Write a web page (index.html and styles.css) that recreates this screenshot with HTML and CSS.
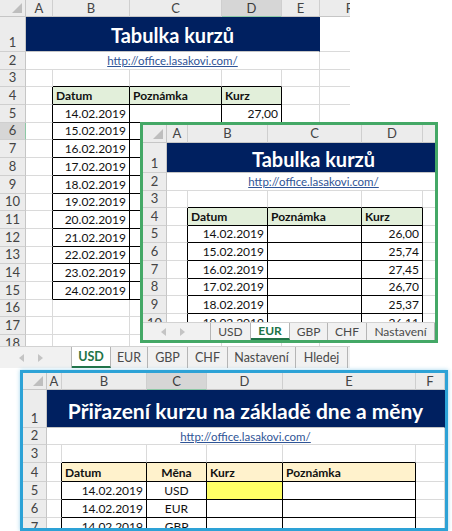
FILE: index.html
```html
<!DOCTYPE html>
<html lang="cs">
<head>
<meta charset="utf-8">
<title>Tabulka kurzů</title>
<link rel="stylesheet" href="styles.css">
</head>
<body>

<!-- Window 1: USD sheet -->
<div class="win w1">
  <div class="sheet">
    <div class="grid g1">
      <div class="c corner"><svg width="10" height="10" viewBox="0 0 10 10"><polygon points="10,0 10,10 0,10" fill="#BEBEBE"/></svg></div>
      <div class="c h">A</div><div class="c h">B</div><div class="c h">C</div><div class="c h sel">D</div><div class="c h">E</div><div class="c h">F</div>

      <div class="c r">1</div><div class="c title s5">Tabulka kurzů</div><div class="c"></div>
      <div class="c r">2</div><div class="c url s5"><span>http://office.lasakovi.com/</span></div><div class="c"></div>
      <div class="c r">3</div><div class="c"></div><div class="c bb"></div><div class="c bb"></div><div class="c bb"></div><div class="c"></div><div class="c"></div>
      <div class="c r">4</div><div class="c br"></div><div class="c th">Datum</div><div class="c th">Poznámka</div><div class="c th">Kurz</div><div class="c"></div><div class="c"></div>
      <div class="c r">5</div><div class="c br"></div><div class="c td n">14.02.2019</div><div class="c td"></div><div class="c td n">27,00</div><div class="c"></div><div class="c"></div>
      <div class="c r rsel">6</div><div class="c br"></div><div class="c td n">15.02.2019</div><div class="c td"></div><div class="c td"></div><div class="c"></div><div class="c"></div>
      <div class="c r">7</div><div class="c br"></div><div class="c td n">16.02.2019</div><div class="c td"></div><div class="c td"></div><div class="c"></div><div class="c"></div>
      <div class="c r">8</div><div class="c br"></div><div class="c td n">17.02.2019</div><div class="c td"></div><div class="c td"></div><div class="c"></div><div class="c"></div>
      <div class="c r">9</div><div class="c br"></div><div class="c td n">18.02.2019</div><div class="c td"></div><div class="c td"></div><div class="c"></div><div class="c"></div>
      <div class="c r">10</div><div class="c br"></div><div class="c td n">19.02.2019</div><div class="c td"></div><div class="c td"></div><div class="c"></div><div class="c"></div>
      <div class="c r">11</div><div class="c br"></div><div class="c td n">20.02.2019</div><div class="c td"></div><div class="c td"></div><div class="c"></div><div class="c"></div>
      <div class="c r">12</div><div class="c br"></div><div class="c td n">21.02.2019</div><div class="c td"></div><div class="c td"></div><div class="c"></div><div class="c"></div>
      <div class="c r">13</div><div class="c br"></div><div class="c td n">22.02.2019</div><div class="c td"></div><div class="c td"></div><div class="c"></div><div class="c"></div>
      <div class="c r">14</div><div class="c br"></div><div class="c td n">23.02.2019</div><div class="c td"></div><div class="c td"></div><div class="c"></div><div class="c"></div>
      <div class="c r">15</div><div class="c br"></div><div class="c td n">24.02.2019</div><div class="c td"></div><div class="c td"></div><div class="c"></div><div class="c"></div>
      <div class="c r">16</div><div class="c"></div><div class="c"></div><div class="c"></div><div class="c"></div><div class="c"></div><div class="c"></div>
      <div class="c r">17</div><div class="c"></div><div class="c"></div><div class="c"></div><div class="c"></div><div class="c"></div><div class="c"></div>
      <div class="c r">18</div><div class="c"></div><div class="c"></div><div class="c"></div><div class="c"></div><div class="c"></div><div class="c"></div>
    </div>
  </div>
  <div class="tabs t1">
    <div class="nav">
      <svg width="6" height="8" viewBox="0 0 6 8"><polygon points="5,0 5,8 0,4" fill="#C4C4C4"/></svg>
      <svg width="6" height="8" viewBox="0 0 6 8"><polygon points="1,0 1,8 6,4" fill="#C4C4C4"/></svg>
    </div>
    <div class="tab act tu">USD</div>
    <div class="tab te">EUR</div>
    <div class="tab tg">GBP</div>
    <div class="tab tc">CHF</div>
    <div class="tab tn">Nastavení</div>
    <div class="tab th2">Hledej</div>
  </div>
</div>

<!-- Window 2: EUR sheet -->
<div class="win w2">
  <div class="sheet">
    <div class="grid g2">
      <div class="c corner"><svg width="10" height="10" viewBox="0 0 10 10"><polygon points="10,0 10,10 0,10" fill="#BEBEBE"/></svg></div>
      <div class="c h">A</div><div class="c h">B</div><div class="c h">C</div><div class="c h">D</div><div class="c h">E</div>

      <div class="c r">1</div><div class="c title s5">Tabulka kurzů</div>
      <div class="c r">2</div><div class="c url s5"><span>http://office.lasakovi.com/</span></div>
      <div class="c r">3</div><div class="c"></div><div class="c bb"></div><div class="c bb"></div><div class="c bb"></div><div class="c"></div>
      <div class="c r">4</div><div class="c br"></div><div class="c th">Datum</div><div class="c th">Poznámka</div><div class="c th">Kurz</div><div class="c"></div>
      <div class="c r">5</div><div class="c br"></div><div class="c td n">14.02.2019</div><div class="c td"></div><div class="c td n">26,00</div><div class="c"></div>
      <div class="c r">6</div><div class="c br"></div><div class="c td n">15.02.2019</div><div class="c td"></div><div class="c td n">25,74</div><div class="c"></div>
      <div class="c r">7</div><div class="c br"></div><div class="c td n">16.02.2019</div><div class="c td"></div><div class="c td n">27,45</div><div class="c"></div>
      <div class="c r">8</div><div class="c br"></div><div class="c td n">17.02.2019</div><div class="c td"></div><div class="c td n">26,70</div><div class="c"></div>
      <div class="c r">9</div><div class="c br"></div><div class="c td n">18.02.2019</div><div class="c td"></div><div class="c td n">25,37</div><div class="c"></div>
      <div class="c r top">10</div><div class="c br"></div><div class="c td n top">19.02.2019</div><div class="c td"></div><div class="c td n top">26,11</div><div class="c"></div>
    </div>
  </div>
  <div class="tabs t2">
    <div class="nav">
      <svg width="6" height="8" viewBox="0 0 6 8"><polygon points="5,0 5,8 0,4" fill="#C4C4C4"/></svg>
      <svg width="6" height="8" viewBox="0 0 6 8"><polygon points="1,0 1,8 6,4" fill="#C4C4C4"/></svg>
    </div>
    <div class="tab tu">USD</div>
    <div class="tab act te">EUR</div>
    <div class="tab tg">GBP</div>
    <div class="tab tc">CHF</div>
    <div class="tab tn">Nastavení</div>
  </div>
</div>

<!-- Window 3: lookup sheet -->
<div class="win w3">
  <div class="sheet">
    <div class="grid g3">
      <div class="c corner"><svg width="10" height="10" viewBox="0 0 10 10"><polygon points="10,0 10,10 0,10" fill="#BEBEBE"/></svg></div>
      <div class="c h">A</div><div class="c h">B</div><div class="c h sel">C</div><div class="c h">D</div><div class="c h">E</div><div class="c h">F</div>

      <div class="c r">1</div><div class="c title big s6">Přiřazení kurzu na základě dne a měny</div>
      <div class="c r">2</div><div class="c url s6"><span>http://office.lasakovi.com/</span></div>
      <div class="c r">3</div><div class="c"></div><div class="c bb"></div><div class="c bb"></div><div class="c bb"></div><div class="c bb"></div><div class="c"></div>
      <div class="c r">4</div><div class="c br"></div><div class="c th or">Datum</div><div class="c th or ctr">Měna</div><div class="c th or">Kurz</div><div class="c th or">Poznámka</div><div class="c"></div>
      <div class="c r">5</div><div class="c br"></div><div class="c td n">14.02.2019</div><div class="c td ctr">USD</div><div class="c td yel"></div><div class="c td"></div><div class="c"></div>
      <div class="c r">6</div><div class="c br"></div><div class="c td n">14.02.2019</div><div class="c td ctr">EUR</div><div class="c td"></div><div class="c td"></div><div class="c"></div>
      <div class="c r top">7</div><div class="c br"></div><div class="c td n top">14.02.2019</div><div class="c td ctr top">GBP</div><div class="c td"></div><div class="c td"></div><div class="c"></div>
    </div>
  </div>
</div>

</body>
</html>
```

FILE: styles.css
```css
* { box-sizing: border-box; margin: 0; padding: 0; }

html, body {
  width: 452px;
  height: 531px;
  overflow: hidden;
  background: #ffffff;
}

body {
  position: relative;
  font-family: Lato, "Liberation Sans", sans-serif;
  font-size: 12px;
  color: #111;
}

/* windows on the desktop */
.win {
  position: absolute;
  overflow: hidden;
  background: #fff;
  display: flex;
  flex-direction: column;
}
.w1 { left: 0; top: 0; width: 350px; height: 368px; }
.w2 {
  left: 140px; top: 122px; width: 298px; height: 221px;
  border: 3px solid #44A866;
}
.w3 {
  left: 20px; top: 370px; width: 428px; height: 161px;
  border: 3px solid #2DA2D6;
  box-shadow: 0 0 4px rgba(45, 162, 214, 0.45);
}

.sheet { flex: 1 1 auto; min-height: 0; overflow: hidden; }

.grid { display: grid; }
.g1 {
  grid-template-columns: 26px 27px 77px 92px 60px 38px 60px;
  grid-template-rows: 17px 35px repeat(17, 17.7px);
}
.g2 {
  grid-template-columns: 24px 21px 80px 94px 61px 38px;
  grid-template-rows: 18px 30px repeat(9, 17.6px);
}
.g3 {
  grid-template-columns: 24px 15px 85px 60px 76px 133px 29px;
  grid-template-rows: 17px 38px 17px 18px 19px 18px 18px 18px;
}

/* cells */
.c {
  display: flex;
  align-items: flex-end;
  padding: 0 3px 2px;
  white-space: nowrap;
  overflow: hidden;
  border-right: 1px solid #DADADA;
  border-bottom: 1px solid #DADADA;
  line-height: 1;
}
.c.top { align-items: flex-start; padding-top: 3px; }
.s5 { grid-column: span 5; }
.s6 { grid-column: span 6; }

.h {
  background: #ECECEC;
  border-right-color: #CFCFCF;
  border-bottom-color: #C6C6C6;
  justify-content: center;
  align-items: center;
  padding: 0;
  color: #444;
  font-size: 13px;
}
.h.sel {
  background: #D6D6D6;
  border-bottom: 1px solid #8CC7A5;
  color: #3a3a3a;
}
.r {
  background: #ECECEC;
  border-right-color: #C6C6C6;
  border-bottom-color: #CFCFCF;
  justify-content: center;
  padding: 0 0 2px;
  color: #444;
  font-size: 13px;
}
.r.rsel {
  background: #D6D6D6;
  border-right: 1px solid #8CC7A5;
}
.corner {
  background: #ECECEC;
  border-right-color: #C6C6C6;
  border-bottom-color: #C6C6C6;
  justify-content: flex-end;
  align-items: flex-end;
  padding: 0 3px 3px 0;
}

.title {
  background: #002060;
  border-right-color: #002060;
  border-bottom-color: #C6C6C6;
  color: #fff;
  font-weight: bold;
  font-size: 20px;
  justify-content: center;
  align-items: center;
  padding: 2px 0 0;
}
.title.big { font-size: 21px; padding-top: 3px; }

.url {
  justify-content: center;
  color: #2F5496;
  font-size: 11.5px;
}
.url span { text-decoration: underline; }

.bb { border-bottom-color: #000; }
.br { border-right-color: #000; }

.th {
  background: #E2EFDA;
  font-weight: bold;
  border-right-color: #000;
  border-bottom-color: #000;
}
.th.or { background: #FFF2CC; }
.td {
  border-right-color: #000;
  border-bottom-color: #000;
}
.n { justify-content: flex-end; }
.ctr { justify-content: center; }
.yel { background: #FFFF66; }

/* sheet tabs */
.tabs {
  flex: none;
  display: flex;
  background: #F1F1F1;
  border-top: 1px solid #D2D2D2;
  color: #4a4a4a;
  font-size: 12.5px;
}
.t1 { height: 22px; }
.t2 { height: 18px; font-size: 12px; }

.nav {
  display: flex;
  align-items: center;
  gap: 12px;
  border-right: 1px solid #B5B5B5;
}
.t1 .nav { width: 72px; padding-left: 19px; }
.t2 .nav { width: 69px; padding-left: 18px; }

.tab {
  flex: none;
  display: flex;
  align-items: center;
  justify-content: center;
  border-right: 1px solid #B5B5B5;
}
.tab.act {
  background: #fff;
  color: #217346;
  font-weight: bold;
  border-bottom: 2px solid #217346;
}

.t1 .tu { width: 39px; }
.t1 .te { width: 37px; }
.t1 .tg { width: 40px; }
.t1 .tc { width: 40px; }
.t1 .tn { width: 68px; }
.t1 .th2 { width: 52px; }

.t2 .tu { width: 40px; }
.t2 .te { width: 39px; }
.t2 .tg { width: 38px; }
.t2 .tc { width: 39px; }
.t2 .tn { width: 68px; }
```
